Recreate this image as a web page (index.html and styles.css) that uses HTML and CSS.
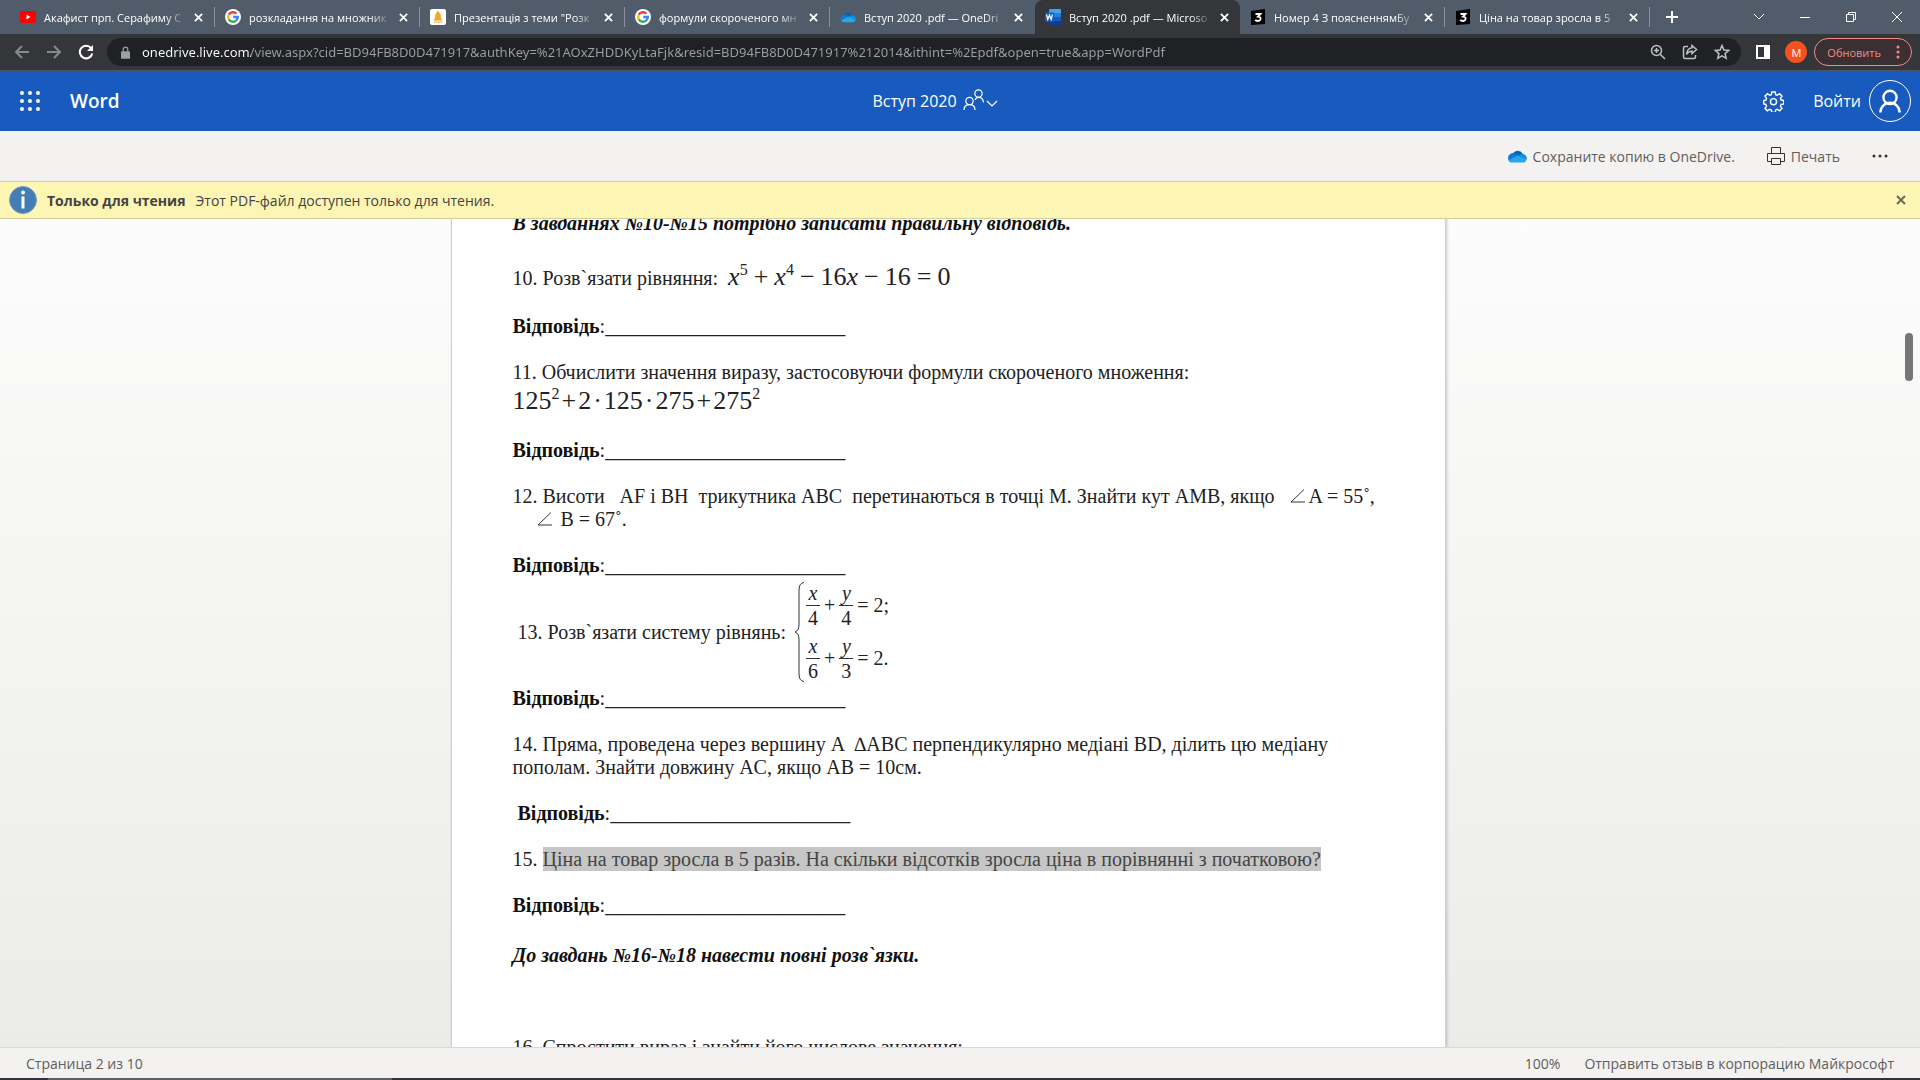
FILE: index.html
```html
<!DOCTYPE html>
<html lang="ru">
<head>
    <meta charset="UTF-8">
    <meta name="viewport" content="width=device-width, initial-scale=1.0">
    <title>Вступ 2020 .pdf — Microsoft Word Online</title>
    <link rel="stylesheet" href="styles.css">
</head>
<body>

    <!-- Icons used more than once -->
    <svg class="defs" aria-hidden="true">
        <symbol id="close" viewBox="0 0 10 10"><path d="M1 1l8 8M9 1L1 9" stroke="currentColor" stroke-width="2" fill="none"/></symbol>
        <symbol id="google" viewBox="0 0 16 16">
            <circle cx="8" cy="8" r="8" fill="#fff"/>
            <g fill="none" stroke-width="2.4">
                <path d="M11.4 4.6A4.8 4.8 0 0 0 3.8 5.7" stroke="#ea4335"/>
                <path d="M3.8 5.7a4.8 4.8 0 0 0 0 4.6" stroke="#fbbc05"/>
                <path d="M3.8 10.3a4.8 4.8 0 0 0 7.3 1.3" stroke="#34a853"/>
                <path d="M11.1 11.6A4.8 4.8 0 0 0 12.8 8H8.2" stroke="#4285f4"/>
            </g>
        </symbol>
        <symbol id="cloud" viewBox="0 0 20 14">
            <path d="M6 4.2A5.6 5.6 0 0 1 15.8 5L12 9 3 5.5Q4.2 4.2 6 4.2z" fill="#0364b8"/>
            <path d="M5 4.4c2-.4 3.600.3 5 1.200l4 2.500-9 5.400A4.600 4.600 0 0 1 5 4.400z" fill="#0f78d4"/>
            <path d="M10 7.200l3-1.600q1.400-.8 3-.6A4.400 4.400 0 0 1 19.500 11z" fill="#1490df"/>
            <path d="M1.300 11.500L10.500 6.600l9 4.200Q18.500 13.600 16 13.600H5q-2.500 0-3.700-2.100z" fill="#28a8ea"/>
        </symbol>
        <symbol id="znanija" viewBox="0 0 16 16">
            <path d="M1 2l14-2v15L1 16z" fill="#000"/>
            <path d="M5.500 5h5L8 7.600q2.800.2 2.600 2.300Q10.200 12 7.800 12 6 12 5.200 10.900" stroke="#fff" stroke-width="1.800" fill="none"/>
        </symbol>
        <symbol id="person" viewBox="0 0 20 20"><g fill="none" stroke="currentColor"><circle cx="10" cy="7" r="5.500"/><path d="M2 19.500a8 8 0 0 1 16 0"/></g></symbol>
    </svg>

    <!-- Browser tabs -->
    <div class="tabs">
        <div class="tab">
            <svg class="favicon" viewBox="0 0 16 16"><rect y="2" width="16" height="12" rx="3" fill="#f00"/><path d="M6.500 5.500v5l4-2.500z" fill="#fff"/></svg>
            <span class="tab-title">Акафист прп. Серафиму С</span>
            <button class="tab-close" aria-label="Закрыть"><svg><use href="#close"/></svg></button>
        </div>
        <div class="tab">
            <svg class="favicon"><use href="#google"/></svg>
            <span class="tab-title">розкладання на множник</span>
            <button class="tab-close" aria-label="Закрыть"><svg><use href="#close"/></svg></button>
        </div>
        <div class="tab">
            <svg class="favicon" viewBox="0 0 16 16"><rect width="16" height="16" rx="2" fill="#fff"/><path d="M8 2Q6.500 2.500 6.500 4 5 5 5 9l-1.500 2.500h9L11 9q0-4-1.500-5Q9.500 2.500 8 2zM4 12.500h8v1H4z" fill="#f5a623"/></svg>
            <span class="tab-title">Презентація з теми "Розк</span>
            <button class="tab-close" aria-label="Закрыть"><svg><use href="#close"/></svg></button>
        </div>
        <div class="tab">
            <svg class="favicon"><use href="#google"/></svg>
            <span class="tab-title">формули скороченого мн</span>
            <button class="tab-close" aria-label="Закрыть"><svg><use href="#close"/></svg></button>
        </div>
        <div class="tab before-active">
            <svg class="favicon"><use href="#cloud"/></svg>
            <span class="tab-title">Вступ 2020 .pdf — OneDri</span>
            <button class="tab-close" aria-label="Закрыть"><svg><use href="#close"/></svg></button>
        </div>
        <div class="tab active">
            <svg class="favicon" viewBox="0 0 16 16"><path d="M5 0h10q1 0 1 1v3H4V1q0-1 1-1z" fill="#41a5ee"/><path d="M4 4h12v4H4z" fill="#2b7cd3"/><path d="M4 8h12v4H4z" fill="#185abd"/><path d="M4 12h12v3q0 1-1 1H5q-1 0-1-1z" fill="#103f91"/><rect y="3.500" width="9" height="9" rx="1" fill="#185abd"/><path d="M1.500 5.500l1.300 5L4.500 6l1.700 4.500 1.300-5" stroke="#fff" stroke-width="1.200" fill="none"/></svg>
            <span class="tab-title">Вступ 2020 .pdf — Microso</span>
            <button class="tab-close" aria-label="Закрыть"><svg><use href="#close"/></svg></button>
        </div>
        <div class="tab">
            <svg class="favicon"><use href="#znanija"/></svg>
            <span class="tab-title">Номер 4 З поясненнямБу</span>
            <button class="tab-close" aria-label="Закрыть"><svg><use href="#close"/></svg></button>
        </div>
        <div class="tab">
            <svg class="favicon"><use href="#znanija"/></svg>
            <span class="tab-title">Ціна на товар зросла в 5</span>
            <button class="tab-close" aria-label="Закрыть"><svg><use href="#close"/></svg></button>
        </div>
        <button class="new-tab" aria-label="Новая вкладка"><svg viewBox="0 0 12 12"><path d="M6 0v12M0 6h12" stroke="#fff" stroke-width="2"/></svg></button>
        <div class="window-buttons">
            <button aria-label="Поиск вкладок"><svg viewBox="0 0 12 12"><path d="M1 3l5 5 5-5"/></svg></button>
            <button aria-label="Свернуть"><svg viewBox="0 0 12 12"><path d="M1 6.500h10"/></svg></button>
            <button aria-label="Восстановить"><svg viewBox="0 0 12 12"><path d="M1.500 3.500h7v7h-7zM3.500 3.500v-2h7v7h-2"/></svg></button>
            <button aria-label="Закрыть окно"><svg viewBox="0 0 12 12"><path d="M1 1l10 10M11 1L1 11"/></svg></button>
        </div>
    </div>

    <!-- Address bar -->
    <div class="toolbar">
        <div class="nav-buttons">
            <button class="dim" aria-label="Назад"><svg viewBox="0 0 16 16"><path d="M15 8H2M8 2L2 8l6 6"/></svg></button>
            <button class="dim" aria-label="Вперёд"><svg viewBox="0 0 16 16"><path d="M1 8h13M8 2l6 6-6 6"/></svg></button>
            <button aria-label="Обновить страницу"><svg viewBox="0 0 16 16"><path d="M13 4A6.300 6.300 0 1 0 14.300 9.500"/><path d="M15 1v6H9z" fill="#fff" stroke="none"/></svg></button>
        </div>
        <div class="address">
            <svg class="lock" viewBox="0 0 10 14"><path d="M1 5.500h8q1 0 1 1V13q0 1-1 1H1q-1 0-1-1V6.500q0-1 1-1z" fill="#9aa0a6"/><path d="M2.500 6V3.500a2.500 2.500 0 0 1 5 0V6" stroke="#9aa0a6" stroke-width="1.400" fill="none"/></svg>
            <input type="text" class="url" aria-label="Адрес" value="onedrive.live.com/view.aspx?cid=BD94FB8D0D471917&amp;authKey=%21AOxZHDDKyLtaFjk&amp;resid=BD94FB8D0D471917%212014&amp;ithint=%2Epdf&amp;open=true&amp;app=WordPdf">
            <button aria-label="Масштаб"><svg viewBox="0 0 16 16"><circle cx="6.500" cy="6.500" r="5"/><path d="M10.200 10.200l4.800 4.800M4 6.500h5M6.500 4v5"/></svg></button>
            <button aria-label="Поделиться"><svg viewBox="0 0 16 16"><path d="M6 2.500H3q-1.500 0-1.500 1.500v9q0 1.500 1.500 1.500h9q1.500 0 1.500-1.500v-2"/><path d="M10 1.500l4.500 4-4.500 4V7.300Q6.500 7 4.500 10.500 5 4.500 10 3.800z"/></svg></button>
            <button aria-label="Добавить в закладки"><svg viewBox="0 0 16 16"><path d="M8 1.500l1.900 4.500 4.800.4-3.600 3.200 1.100 4.700L8 11.800l-4.200 2.500 1.100-4.700L1.300 6.400 6.100 6z"/></svg></button>
        </div>
        <button class="panel-btn" aria-label="Боковая панель"><svg viewBox="0 0 14 14"><path d="M1 1h12v12H1z" fill="none" stroke="#fff" stroke-width="2"/><path d="M8 1h5v12H8z" fill="#fff"/></svg></button>
        <button class="profile">М</button>
        <button class="update">Обновить <svg viewBox="0 0 4 14"><circle cx="2" cy="2" r="1.500"/><circle cx="2" cy="7" r="1.500"/><circle cx="2" cy="12" r="1.500"/></svg></button>
    </div>

    <!-- Word header -->
    <header class="header">
        <div class="brand">
            <button aria-label="Приложения">
                <svg class="waffle" viewBox="0 0 20 20"><g fill="#fff"><circle cx="2" cy="2" r="2"/><circle cx="10" cy="2" r="2"/><circle cx="18" cy="2" r="2"/><circle cx="2" cy="10" r="2"/><circle cx="10" cy="10" r="2"/><circle cx="18" cy="10" r="2"/><circle cx="2" cy="18" r="2"/><circle cx="10" cy="18" r="2"/><circle cx="18" cy="18" r="2"/></g></svg>
            </button>
            <a href="#" class="app-name">Word</a>
        </div>
        <button class="doc-name">
            Вступ 2020
            <svg viewBox="0 0 36 24"><g fill="none" stroke="#fff" stroke-width="1.200"><circle cx="6.500" cy="12" r="3.700"/><path d="M1 21q0-5.300 5.500-5.300t5.500 5.300"/><circle cx="15.500" cy="4.500" r="3.700"/><path d="M12 11q1-2.600 3.500-2.600 4.500 0 5 5"/><path d="M24 12l5 5 5-5"/></g></svg>
        </button>
        <div class="account">
            <button aria-label="Параметры"><svg class="gear" viewBox="0 0 22 22"><g fill="none" stroke="#fff" stroke-width="1.500"><path d="M9.200 1h3.600l.5 2.800 1.700.7 2.400-1.600 2.500 2.500-1.600 2.400.7 1.700 2.800.5v3.600l-2.800.5-.7 1.700 1.600 2.400-2.500 2.500-2.400-1.600-1.700.7-.5 2.800H9.200l-.5-2.800-1.700-.7-2.400 1.600-2.500-2.500 1.600-2.400-.7-1.700L.8 13.600V10l2.200-.5.7-1.700-1.600-2.400 2.500-2.500L7 4.500l1.700-.7z"/><circle cx="11" cy="11.200" r="3.200"/></g></svg></button>
            <a href="#" class="sign-in">Войти <span class="avatar"><svg><use href="#person"/></svg></span></a>
        </div>
    </header>

    <!-- Commands -->
    <div class="commands">
        <button><svg class="cloud-icon"><use href="#cloud"/></svg>Сохраните копию в OneDrive.</button>
        <button><svg class="print-icon" viewBox="0 0 18 18"><path d="M4.500 6.500v-6h9v6M4.500 14.500h-4v-8h17v8h-4M4.500 11.500h9v6h-9z" fill="none" stroke="#333"/></svg>Печать</button>
        <button aria-label="Ещё"><svg class="more-icon" viewBox="0 0 16 4"><g fill="#333"><circle cx="2" cy="2" r="1.500"/><circle cx="8" cy="2" r="1.500"/><circle cx="14" cy="2" r="1.500"/></g></svg></button>
    </div>

    <!-- Read only message -->
    <div class="message">
        <svg class="info" viewBox="0 0 28 28"><circle cx="14" cy="14" r="13.500" fill="#447cb4" stroke="#6f9dc9"/><circle cx="14" cy="6.500" r="2" fill="#fff"/><path d="M12.500 10.500h3v12h-3z" fill="#fff"/></svg>
        <strong>Только для чтения</strong>
        <span>Этот PDF-файл доступен только для чтения.</span>
        <button aria-label="Закрыть"><svg><use href="#close"/></svg></button>
    </div>

    <!-- Document -->
    <main class="viewer">
        <article class="page">
            <p class="section">В завданнях №10-№15 потрібно записати правильну відповідь.</p>
            <p class="with-formula">10. Розв`язати рівняння:  <span class="formula equation"><span><i>x</i><sup>5</sup></span><span>+</span><span><i>x</i><sup>4</sup></span><span>−</span><span>16<i>x</i></span><span>−</span><span>16</span><span>=</span><span>0</span></span></p>
            <p><b>Відповідь</b>:________________________</p>
            <div class="task">
                <p>11. Обчислити значення виразу, застосовуючи формули скороченого множення:</p>
                <p class="formula squares"><span>125<sup>2</sup></span><span>+</span><span>2</span><span>·</span><span>125</span><span>·</span><span>275</span><span>+</span><span>275<sup>2</sup></span></p>
            </div>
            <p><b>Відповідь</b>:________________________</p>
            <div class="task">
                <p>12. Висоти   AF і BH  трикутника ABC  перетинаються в точці M. Знайти кут AMB, якщо   <svg class="angle" viewBox="0 0 16 14"><path d="M14 .5L1 13h14"/></svg>A = 55˚,</p>
                <p class="continued"><svg class="angle" viewBox="0 0 16 14"><path d="M14 .5L1 13h14"/></svg> B = 67˚.</p>
            </div>
            <div class="task">
                <p><b>Відповідь</b>:________________________</p>
                <div class="system-row">
                    <p> 13. Розв`язати систему рівнянь:</p>
                    <svg class="brace" viewBox="0 0 10 100"><path d="M9 .5Q4 1 4 8v34q0 7-4 8 4 1 4 8v34q0 7 5 7.500"/></svg>
                    <div class="system">
                        <div class="line"><span class="fraction"><i>x</i><span>4</span></span>+<span class="fraction"><i>y</i><span>4</span></span><span>= 2;</span></div>
                        <div class="line"><span class="fraction"><i>x</i><span>6</span></span>+<span class="fraction"><i>y</i><span>3</span></span><span>= 2.</span></div>
                    </div>
                </div>
                <p><b>Відповідь</b>:________________________</p>
            </div>
            <div class="task">
                <p>14. Пряма, проведена через вершину A  ∆ABC перпендикулярно медіані BD, ділить цю медіану</p>
                <p>пополам. Знайти довжину AC, якщо AB = 10см.</p>
            </div>
            <p> <b>Відповідь</b>:________________________</p>
            <p>15. <mark>Ціна на товар зросла в 5 разів. На скільки відсотків зросла ціна в порівнянні з початковою?</mark></p>
            <p><b>Відповідь</b>:________________________</p>
            <p class="section last">До завдань №16-№18 навести повні розв`язки.</p>
            <p>16. Спростити вираз і знайти його числове значення:</p>
        </article>
        <div class="scroll-thumb"></div>
    </main>

    <!-- Status bar -->
    <footer class="status">
        <span>Страница 2 из 10</span>
        <span class="zoom">100%</span>
        <a href="#">Отправить отзыв в корпорацию Майкрософт</a>
    </footer>
    <div class="taskbar"><div class="taskbar-search"></div></div>

</body>
</html>
```
FILE: styles.css
```css
* {
    box-sizing: border-box;
}
body {
    margin: 0;
    height: 100vh;
    display: flex;
    flex-direction: column;
    overflow: hidden;
    font-family: "Open Sans", "Noto Sans", sans-serif;
    font-size: 14px;
    color: #444;
}
button {
    display: flex;
    align-items: center;
    padding: 0;
    border: none;
    background: none;
    color: inherit;
    font: inherit;
    cursor: pointer;
}
a {
    color: inherit;
    text-decoration: none;
}
svg {
    display: block;
    flex: none;
}
.defs {
    position: absolute;
    width: 0;
    height: 0;
}

/* Tabs */
.tabs {
    flex: none;
    display: flex;
    align-items: center;
    height: 34px;
    padding-left: 10px;
    background: #505c69;
    color: #fff;
    font-size: 11px;
}
.tab {
    flex: 0 1 205px;
    min-width: 0;
    display: flex;
    align-items: center;
    gap: 8px;
    height: 20px;
    padding: 0 11px 0 10px;
    border-right: 1px solid #8a939c;
}
.before-active {
    border-color: transparent;
}
.tab.active {
    height: 34px;
    border: none;
    border-radius: 8px 8px 0 0;
    background: #35363a;
}
.favicon {
    width: 16px;
    height: 16px;
}
.tab-title {
    flex: 1;
    white-space: nowrap;
    -webkit-mask-image: linear-gradient(90deg, #000 85%, transparent);
    mask-image: linear-gradient(90deg, #000 85%, transparent);
}
.tab-close svg {
    width: 9px;
    height: 9px;
}
.new-tab {
    padding: 0 16px;
}
.new-tab svg {
    width: 12px;
    height: 12px;
}
.window-buttons {
    display: flex;
    margin-left: auto;
    height: 28px;
}
.window-buttons button {
    width: 46px;
    justify-content: center;
}
.window-buttons svg {
    width: 12px;
    height: 12px;
    fill: none;
    stroke: #fff;
}

/* Address bar */
.toolbar {
    flex: none;
    display: flex;
    align-items: center;
    height: 37px;
    padding: 0 8px 0 14px;
    background: #35363a;
    border-bottom: 1px solid #4b5560;
}
.nav-buttons {
    display: flex;
    gap: 16px;
    margin-right: 13px;
}
.nav-buttons svg,
.address button svg {
    width: 16px;
    height: 16px;
    fill: none;
    stroke: #fff;
    stroke-width: 2;
}
.nav-buttons .dim svg {
    stroke: #87898c;
}
.address {
    flex: 1;
    display: flex;
    align-items: center;
    gap: 16px;
    height: 28px;
    padding: 0 11px 0 14px;
    border-radius: 14px;
    background: #202124;
}
.address button svg {
    stroke: #bdc1c6;
    stroke-width: 1.5;
}
.lock {
    width: 9px;
    height: 13px;
}
.url {
    flex: 1;
    min-width: 0;
    margin-left: -4px;
    padding: 0;
    border: none;
    outline: none;
    font-family: "Noto Sans", sans-serif;
    font-size: 13px;
    color: transparent;
    background: linear-gradient(90deg, #fff 109px, #9aa0a6 109px);
    -webkit-background-clip: text;
    background-clip: text;
}
.panel-btn {
    margin: 0 15px;
}
.panel-btn svg {
    width: 14px;
    height: 14px;
}
.profile {
    justify-content: center;
    width: 22px;
    height: 22px;
    margin-right: 7px;
    border-radius: 50%;
    background: #f4511e;
    color: #fff;
    font-size: 11px;
}
.update {
    gap: 15px;
    height: 28px;
    padding: 0 11px 0 12px;
    border: 1px solid #f28b82;
    border-radius: 14px;
    background: #3a3033;
    color: #f28b82;
    font-size: 11px;
}
.update svg {
    width: 4px;
    height: 14px;
    fill: #f28b82;
}

/* Word header */
.header {
    flex: none;
    display: grid;
    grid-template-columns: 1fr auto 1fr;
    align-items: center;
    height: 60px;
    padding: 0 9px 0 20px;
    background: #185abd;
    color: #fff;
    font-size: 16px;
}
.brand {
    display: flex;
    align-items: center;
    gap: 30px;
}
.waffle {
    width: 20px;
    height: 20px;
}
.app-name {
    font-size: 19px;
    font-weight: 600;
}
.doc-name {
    gap: 6px;
    margin-right: 60px;
}
.doc-name svg {
    width: 36px;
    height: 24px;
}
.account {
    display: flex;
    align-items: center;
    justify-content: flex-end;
    gap: 29px;
}
.gear {
    width: 21px;
    height: 21px;
}
.sign-in {
    display: flex;
    align-items: center;
    gap: 8px;
}
.avatar {
    display: flex;
    align-items: center;
    justify-content: center;
    width: 42px;
    height: 42px;
    border: 1px solid #fff;
    border-radius: 50%;
}
.avatar svg {
    width: 24px;
    height: 24px;
    stroke-width: 2;
}

/* Commands */
.commands {
    flex: none;
    display: flex;
    align-items: center;
    justify-content: flex-end;
    gap: 32px;
    height: 50px;
    padding-right: 32px;
    background: #f3f2f1;
    color: #605e5c;
}
.commands button {
    gap: 6px;
}
.cloud-icon {
    width: 20px;
    height: 14px;
}
.print-icon {
    width: 18px;
    height: 18px;
}
.more-icon {
    width: 16px;
    height: 4px;
}

/* Read only message */
.message {
    flex: none;
    display: flex;
    align-items: center;
    gap: 10px;
    height: 38px;
    padding: 0 14px 0 9px;
    border: solid #d2cf9e;
    border-width: 1px 0;
    background: #fcf5b3;
}
.message button {
    margin-left: auto;
    color: #6b6b55;
}
.message button svg {
    width: 10px;
    height: 10px;
}
.info {
    width: 28px;
    height: 28px;
}

/* Document */
.viewer {
    position: relative;
    flex: 1;
    min-height: 0;
    overflow: hidden;
    padding-right: 24px;
    background: linear-gradient(#fcfcfc, #f4f4f2 50%, #ebebea);
}
.page {
    display: flex;
    flex-direction: column;
    gap: 23px;
    max-width: 995px;
    margin: -7px auto 0;
    padding: 0 60px 60px 61px;
    border: solid #d0d0d0;
    border-width: 0 1px;
    box-shadow: 1px 0 3px rgba(0, 0, 0, 0.2);
    background: #fff;
    color: #222;
    font-family: "Liberation Serif", serif;
    font-size: 20px;
    line-height: 23px;
}
.page p {
    margin: 0;
    white-space: pre;
}
.page b,
.page .section {
    color: #111;
}
.section {
    font-weight: bold;
    font-style: italic;
}
.page .last {
    margin: 4px 0 46px;
}
.page mark {
    padding: 1px 0;
    background: #c6c6c6;
    color: #444;
}
.formula {
    font-size: 26px;
}
.formula sup {
    font-size: 16px;
    line-height: 1;
    vertical-align: 10px;
}
.equation {
    display: inline-flex;
    gap: 6px;
}
.page .with-formula {
    height: 34px;
    line-height: 38px;
}
.page .squares {
    display: flex;
    gap: 2px;
    height: 32px;
    line-height: 34px;
}
.angle {
    display: inline-block;
    width: 16px;
    height: 14px;
    margin-right: 3px;
    fill: none;
    stroke: #333;
}
.continued {
    padding-left: 24px;
}
.system-row {
    display: flex;
    align-items: center;
    height: 110px;
}
.brace {
    width: 10px;
    height: 100px;
    margin: 0 1px 0 9px;
    fill: none;
    stroke: #333;
}
.system {
    display: flex;
    flex-direction: column;
    gap: 5px;
}
.line {
    display: flex;
    align-items: center;
    gap: 4px;
}
.fraction {
    display: flex;
    flex-direction: column;
    align-items: center;
    width: 14px;
    line-height: 24px;
}
.fraction i {
    width: 100%;
    border-bottom: 1px solid #333;
    text-align: center;
    line-height: 23px;
}
.scroll-thumb {
    position: absolute;
    top: 114px;
    right: 7px;
    width: 8px;
    height: 48px;
    border-radius: 4px;
    background: #767676;
}

/* Status bar */
.status {
    flex: none;
    display: flex;
    align-items: center;
    gap: 24px;
    height: 31px;
    padding: 0 26px;
    border-top: 1px solid #d8d8d8;
    background: #f3f2f1;
    color: #605e5c;
}
.zoom {
    margin-left: auto;
}
.taskbar {
    flex: none;
    height: 2px;
    padding-left: 48px;
    background: #32343a;
}
.taskbar-search {
    width: 344px;
    height: 2px;
    background: #5b5e63;
}
```
